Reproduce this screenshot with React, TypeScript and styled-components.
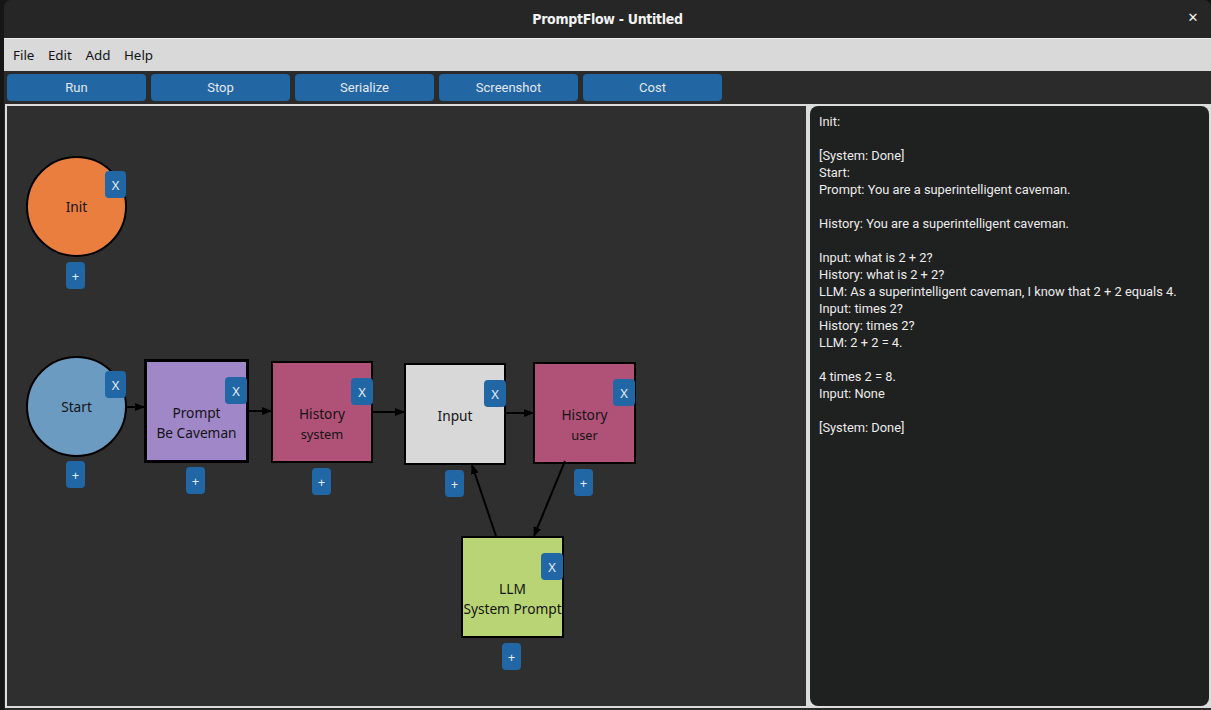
import React from "react";
import styled, { createGlobalStyle } from "styled-components";

const Global = createGlobalStyle`
  html, body { margin: 0; padding: 0; background: #161616; overflow: hidden; }
  #root { width: 1211px; height: 710px; }
`;

const Window = styled.div`
  margin-left: 4px;
  width: 1207px;
  height: 710px;
  display: flex;
  flex-direction: column;
  background: #2a2a2a;
  border-radius: 8px 8px 0 0;
  overflow: hidden;
`;

const TitleBar = styled.div`
  height: 38px;
  flex: none;
  background: #262626;
  position: relative;
  display: flex;
  align-items: center;
  justify-content: center;
  color: #f2f2f2;
  font-family: "DejaVu Sans Condensed", "DejaVu Sans", sans-serif;
  font-weight: bold;
  font-size: 14px;
  letter-spacing: -0.3px;
`;

const Close = styled.span`
  position: absolute;
  right: 13px;
  top: 10px;
  font-family: "DejaVu Sans", sans-serif;
  font-weight: bold;
  font-size: 13px;
  color: #f2f2f2;
`;

const MenuBar = styled.div`
  height: 33px;
  flex: none;
  background: #d9d9d9;
  border-top: 1px solid #ececec;
  box-sizing: border-box;
  display: flex;
  align-items: center;
  gap: 13.5px;
  padding-left: 9px;
  font-family: "Noto Sans", sans-serif;
  font-size: 13.4px;
  color: #151515;
`;

const Toolbar = styled.div`
  height: 33px;
  flex: none;
  box-sizing: border-box;
  background: #2b2b2b;
  display: flex;
  gap: 5px;
  padding: 3px 0 0 3px;
`;

const ToolButton = styled.button`
  width: 139px;
  height: 27px;
  border: none;
  border-radius: 4px;
  background: #2266a3;
  color: #e2e8ee;
  font-family: Roboto, sans-serif;
  font-size: 13px;
  padding: 0;
`;

const Main = styled.div`
  flex: none;
  height: 604px;
  margin-left: 1px;
  box-sizing: border-box;
  padding: 2px;
  background: #dcdcdc;
  display: flex;
  gap: 4px;
`;

const Canvas = styled.div`
  position: relative;
  width: 799px;
  height: 600px;
  background: #2f2f2f;
  overflow: hidden;
`;

const Output = styled.div`
  flex: 1;
  background: #1f2020;
  border-radius: 8px;
  padding: 7px 9px;
  color: #ececec;
  font-family: Roboto, sans-serif;
  font-size: 12.85px;
  line-height: 17px;
  white-space: pre;
`;

const Edges = styled.svg`
  position: absolute;
  left: 0;
  top: 0;
  pointer-events: none;
`;

const NodeShape = styled.div<{ $round?: boolean; $bw: number; $lines: number }>`
  position: absolute;
  box-sizing: border-box;
  border: ${(p) => p.$bw}px solid #000;
  border-radius: ${(p) => (p.$round ? "50%" : "0")};
  padding-top: ${(p) => (p.$round ? 0 : p.$lines > 1 ? 24 : 4)}px;
  display: flex;
  flex-direction: column;
  align-items: center;
  justify-content: center;
  font-family: "Noto Sans", sans-serif;
  font-size: 13.7px;
  line-height: 20px;
  color: #141414;
  white-space: nowrap;
`;

const Label = styled.span<{ $small?: boolean }>`
  font-size: ${(p) => (p.$small ? "12.8px" : "inherit")};
`;

const SmallButton = styled.div<{ $w: number }>`
  position: absolute;
  width: ${(p) => p.$w}px;
  height: 27px;
  border-radius: 4px;
  background: #2167a5;
  color: #e6ecf2;
  display: flex;
  align-items: center;
  justify-content: center;
  font-family: "Noto Sans", sans-serif;
  font-size: 13px;
`;

type N = {
  label: string[];
  color: string;
  x: number;
  y: number;
  w: number;
  h: number;
  round?: boolean;
  smallSub?: boolean;
  bw: number;
  xb: [number, number];
  pb: [number, number];
};

const nodes: N[] = [
  { label: ["Init"], color: "#e97e3f", x: 19, y: 50, w: 101, h: 101, round: true, bw: 2, xb: [98, 65], pb: [59, 156] },
  { label: ["Start"], color: "#6b9bc1", x: 19, y: 250, w: 101, h: 101, round: true, bw: 2, xb: [98, 265], pb: [59, 355] },
  { label: ["Prompt", "Be Caveman"], color: "#a087c8", x: 137, y: 253, w: 105, h: 104, bw: 3, xb: [218, 271], pb: [179, 361] },
  { label: ["History", "system"], color: "#b05278", x: 264, y: 255, w: 102, h: 102, bw: 2, smallSub: true, xb: [344, 272], pb: [305, 362] },
  { label: ["Input"], color: "#d8d8d8", x: 397, y: 257, w: 102, h: 102, bw: 2, xb: [477, 274], pb: [438, 364] },
  { label: ["History", "user"], color: "#b05278", x: 526, y: 256, w: 103, h: 102, bw: 2, smallSub: true, xb: [606, 273], pb: [567, 363] },
  { label: ["LLM", "System Prompt"], color: "#b9d475", x: 454, y: 430, w: 103, h: 102, bw: 2, xb: [534, 447], pb: [495, 537] },
];

const edges: [number, number, number, number][] = [
  [119, 301, 137, 301],
  [241, 305, 264, 305],
  [366, 306, 397, 306],
  [499, 307, 526, 307],
  [558, 355, 527, 430],
  [489, 430, 465, 359],
];

const log = `Init:

[System: Done]
Start:
Prompt: You are a superintelligent caveman.

History: You are a superintelligent caveman.

Input: what is 2 + 2?
History: what is 2 + 2?
LLM: As a superintelligent caveman, I know that 2 + 2 equals 4.
Input: times 2?
History: times 2?
LLM: 2 + 2 = 4.

4 times 2 = 8.
Input: None

[System: Done]`;

export default function App() {
  return (
    <>
      <Global />
      <Window>
        <TitleBar>
          PromptFlow - Untitled
          <Close>✕</Close>
        </TitleBar>
        <MenuBar>
          <span>File</span>
          <span>Edit</span>
          <span>Add</span>
          <span>Help</span>
        </MenuBar>
        <Toolbar>
          {["Run", "Stop", "Serialize", "Screenshot", "Cost"].map((t) => (
            <ToolButton key={t}>{t}</ToolButton>
          ))}
        </Toolbar>
        <Main>
          <Canvas>
            {nodes.map((n, i) => (
              <React.Fragment key={i}>
                <NodeShape
                  $round={n.round}
                  $bw={n.bw}
                  $lines={n.label.length}
                  style={{ left: n.x, top: n.y, width: n.w, height: n.h, background: n.color }}
                >
                  {n.label.map((l, j) => (
                    <Label key={l} $small={n.smallSub && j > 0}>
                      {l}
                    </Label>
                  ))}
                </NodeShape>
                <SmallButton $w={n.round ? 21 : 22} style={{ left: n.xb[0], top: n.xb[1] }}>
                  X
                </SmallButton>
                <SmallButton $w={19} style={{ left: n.pb[0], top: n.pb[1] }}>
                  +
                </SmallButton>
              </React.Fragment>
            ))}
            <Edges width={799} height={600}>
              <defs>
                <marker id="ah" markerWidth="10" markerHeight="8" refX="9" refY="4" orient="auto" markerUnits="userSpaceOnUse">
                  <path d="M0,0 L10,4 L0,8 Z" fill="#000" />
                </marker>
              </defs>
              {edges.map(([x1, y1, x2, y2], i) => (
                <line key={i} x1={x1} y1={y1} x2={x2} y2={y2} stroke="#000" strokeWidth={2} markerEnd="url(#ah)" />
              ))}
            </Edges>
          </Canvas>
          <Output>{log}</Output>
        </Main>
      </Window>
    </>
  );
}
